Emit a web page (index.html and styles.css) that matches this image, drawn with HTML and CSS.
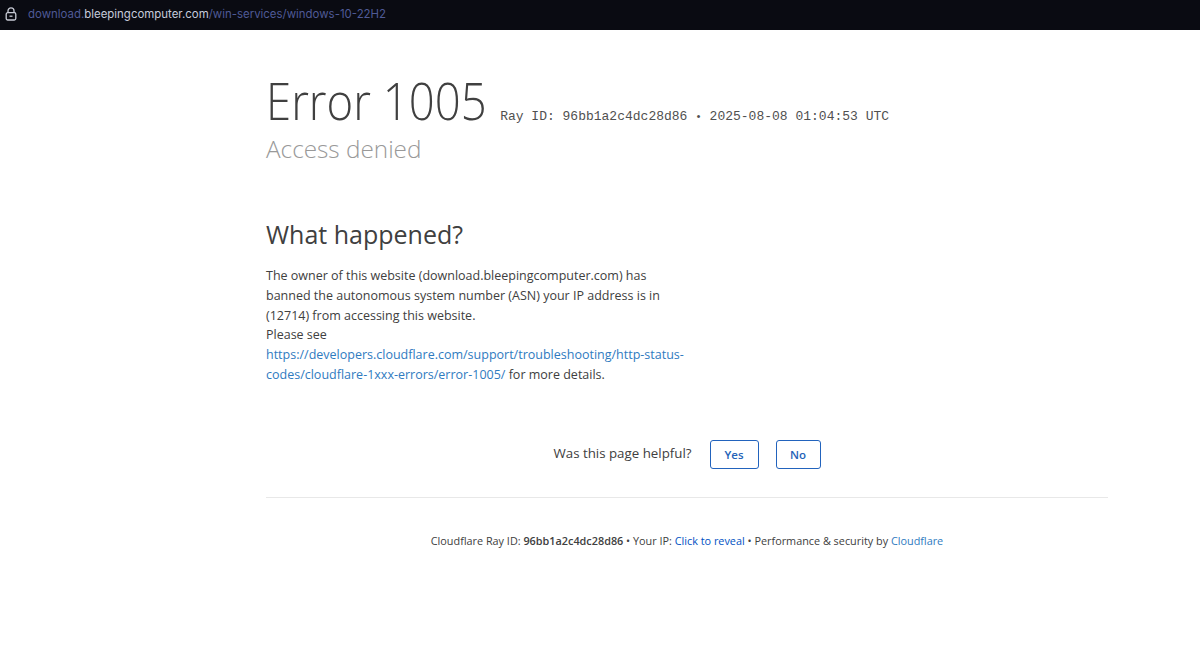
FILE: index.html
```html
<!DOCTYPE html>
<html lang="en">
<head>
<meta charset="utf-8">
<title>Access denied</title>
<link rel="stylesheet" href="styles.css">
</head>
<body>
<header class="urlbar">
  <svg class="lock" width="12" height="14" viewBox="0 0 12 14" fill="none" stroke="#c9ccd6" stroke-width="1.3"><rect x="1.2" y="5.7" width="9.6" height="7.3" rx="1.5"/><path d="M3 5.7V3.8a3 3 0 0 1 6 0v1.9"/><path d="M4.5 9.2h3"/></svg>
  <span class="url"><span class="dim">download.</span><span class="host">bleepingcomputer.com</span><span class="dim">/win-services/windows-10-22H2</span></span>
</header>
<main class="page">
  <section class="head">
    <h1 class="title"><span class="code">Error 1005</span><span class="ray">Ray ID: 96bb1a2c4dc28d86 <span class="dot">•</span> 2025-08-08 01:04:53 UTC</span></h1>
    <h2 class="subtitle">Access denied</h2>
  </section>
  <section class="what">
    <h2 class="what-title">What happened?</h2>
    <p class="what-text">The owner of this website (download.bleepingcomputer.com) has banned the autonomous system number (ASN) your IP address is in (12714) from accessing this website.<br>Please see <a class="link" href="#">https://developers.cloudflare.com/support/troubleshooting/http-status-codes/cloudflare-1xxx-errors/error-1005/</a> for more details.</p>
  </section>
  <section class="feedback">
    <span class="question">Was this page helpful?</span>
    <button class="btn btn-yes">Yes</button>
    <button class="btn">No</button>
  </section>
  <footer class="foot">Cloudflare Ray ID: <strong class="rid">96bb1a2c4dc28d86</strong> • Your IP: <a class="reveal" href="#">Click to reveal</a> • Performance &amp; security by <a class="link" href="#">Cloudflare</a></footer>
</main>
</body>
</html>
```
FILE: styles.css
```css
* { box-sizing: border-box; }
html, body { margin: 0; height: 100%; overflow: hidden; background: #fff; }
body { font-family: "Open Sans", "Noto Sans", sans-serif; color: #404040; }
.urlbar { height: 30px; background: #0a0b12; display: flex; align-items: center; padding: 0 0 3px 5px; gap: 11px; font-family: Inter, sans-serif; font-size: 11.45px; }
.lock { flex: none; }
.dim { color: #4f5a96; }
.host { color: #c6cbdc; }
.page { width: 842px; margin-left: 266px; padding-top: 37px; }
.title { margin: 0; font-weight: 300; display: flex; align-items: baseline; height: 65px; line-height: 66px; color: #404040; }
.code { display: inline-block; font-size: 52px; transform: scaleX(0.875); transform-origin: 0 50%; margin-right: -31px; }
.ray { font-family: "Liberation Mono", monospace; font-size: 13px; font-weight: 400; margin-left: 13px; color: #505050; }
.dot { font-size: 11px; }
.subtitle { margin: 0; font-size: 24.3px; font-weight: 300; line-height: 33px; color: #999; }
.what { margin-top: 51px; width: 421px; }
.what-title { margin: 0 0 14px; font-size: 25px; font-weight: 400; line-height: 36px; color: #404040; }
.what-text { margin: 0; font-size: 12.5px; line-height: 19.8px; }
.link { color: #2f7bbf; text-decoration: none; }
.reveal { color: #0051c3; text-decoration: none; }
.feedback { margin-top: 55px; height: 58px; display: flex; align-items: flex-start; justify-content: center; border-bottom: 1px solid #e8e8e8; font-size: 13.3px; }
.question { margin-top: 4px; margin-right: 18px; }
.btn { width: 49px; height: 29px; padding: 0; margin-right: 17px; background: #fff; border: 1px solid #2263bd; border-radius: 3px; color: #2563b8; font: 600 11.5px "Open Sans", sans-serif; }
.btn:last-child { width: 45px; margin-right: 0; }
.foot { margin-top: 35px; text-align: center; font-size: 10.85px; line-height: 16px; }
.rid { font-weight: 600; }
```
